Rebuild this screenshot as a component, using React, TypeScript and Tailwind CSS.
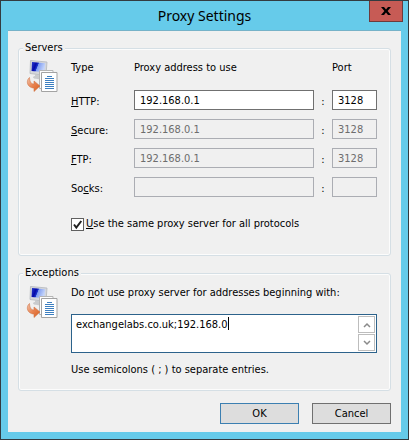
import { useState } from "react";
import type { ReactNode } from "react";

type Row = { id: string; label: ReactNode; address: string; port: string; disabled: boolean };

const Key = ({ children }: { children: string }) => (
  <span className="underline decoration-1 underline-offset-1">{children}</span>
);

const rows: Row[] = [
  { id: "http", label: <><Key>H</Key>TTP:</>, address: "192.168.0.1", port: "3128", disabled: false },
  { id: "secure", label: <><Key>S</Key>ecure:</>, address: "192.168.0.1", port: "3128", disabled: true },
  { id: "ftp", label: <><Key>F</Key>TP:</>, address: "192.168.0.1", port: "3128", disabled: true },
  { id: "socks", label: <>So<Key>c</Key>ks:</>, address: "", port: "", disabled: true },
];

const ProxyIcon = ({ id }: { id: string }) => (
  <svg width="32" height="32" viewBox="0 0 32 32" className="shrink-0" aria-hidden="true">
    <defs>
      <linearGradient id={`${id}-screen`} x1="0" y1="0" x2="1" y2="0.3">
        <stop offset="0" stopColor="#2a3fd0" />
        <stop offset="0.35" stopColor="#0508a8" />
        <stop offset="0.5" stopColor="#1a35cc" />
        <stop offset="0.54" stopColor="#7f9cf0" />
        <stop offset="1" stopColor="#c4d4fa" />
      </linearGradient>
      <linearGradient id={`${id}-arrow`} x1="0" y1="0" x2="1" y2="1">
        <stop offset="0" stopColor="#f3c3ab" />
        <stop offset="0.5" stopColor="#e8824f" />
        <stop offset="1" stopColor="#d85f20" />
      </linearGradient>
    </defs>
    <path d="M9 14.5l6 1v2c2 .5 2 1.800-1 1.800-4 0-7-.8-7-2 0-.8 2-1.300 2-1.300z" fill="#c9cbcd" />
    <path d="M4.500.5L21 2l-1 13.500L4 13.500z" fill="#d5d7db" stroke="#b4b7bd" strokeWidth=".8" />
    <path d="M6 2l13.200 1.200-.8 9L5.500 11z" fill={`url(#${id}-screen)`} />
    <path d="M13.500 10.500h13.500v18H13.500z" fill="#fdfdfd" stroke="#b5b5b5" />
    <path d="M15.500 12.500h15.500v19H15.500z" fill="#fff" stroke="#a3a3a3" />
    <path d="M21 16.500h5" stroke="#3d7fc0" />
    <path d="M19 18.500h9M19 20.500h9M19 22.500h9M19 24.500h9M19 26.500h9M19 28.500h9" stroke="#3d7fc0" />
    <path
      d="M3.500 17.500C1 19.500.5 23.500 3 26c1.500 1.500 3.300 2 5 2v3.500l6-5.500-6-5v3C5.500 24 3.800 22.500 3.500 17.500z"
      fill={`url(#${id}-arrow)`}
      stroke="#d07548"
      strokeWidth=".6"
    />
  </svg>
);

const Group = ({ title, className, children }: { title: string; className: string; children: ReactNode }) => (
  <fieldset className="min-w-0 rounded-[3px] border border-[#d5dfe5] pr-[13px] pl-[7px] shadow-[inset_0_0_0_1px_#fcfcfc]">
    <legend className="-ml-[3px] bg-[#f0f0f0] px-[2px] leading-[14px]">{title}</legend>
    <div className={`flex items-start gap-[13px] ${className}`}>{children}</div>
  </fieldset>
);

const fieldClass =
  "h-5 w-full min-w-0 border border-[#707070] bg-white px-[5px] text-black outline-none disabled:border-[#abadb3] disabled:bg-[#f0f0f0] disabled:text-[#6d6d6d]";

export default function App() {
  const [same, setSame] = useState(true);
  const [exceptions, setExceptions] = useState("exchangelabs.co.uk;192.168.0");

  return (
    <main className="border border-[#333b40] bg-[#66cbea] px-[7px] pb-[7px] font-['DejaVu_Sans_Condensed','DejaVu_Sans',sans-serif] text-[11px] leading-[14px] text-black">
      <header className="relative flex h-[29px] items-center justify-center">
        <h1 className="font-['Noto_Sans',sans-serif] text-[14px] leading-5">Proxy Settings</h1>
        <button
          aria-label="Close"
          className="absolute -right-[2px] top-0 flex h-[21px] w-[34px] items-center justify-center border border-t-0 border-[#6d3a3c] bg-[#c75b55]"
        >
          <svg width="10" height="8" viewBox="0 0 10 8" aria-hidden="true">
            <path d="M0 0h3l2 2.500L7 0h3L6.600 4 10 8H7L5 5.500 3 8H0l3.400-4z" fill="#000" />
          </svg>
        </button>
      </header>

      <form className="border-t border-[#76b2c8] bg-[#f0f0f0] px-[10px] pb-2 pt-[10px]" onSubmit={(e) => e.preventDefault()}>
        <Group title="Servers" className="pt-[5px] pb-6">
          <ProxyIcon id="servers" />
          <div className="min-w-0 flex-1">
            <div className="grid grid-cols-[63px_1fr_18px_45px] gap-y-[9px]">
              <span className="pt-px pb-[6px]">Type</span>
              <span className="col-span-2 pt-px">Proxy address to use</span>
              <span className="pt-px">Port</span>
              {rows.map((row) => (
                <div key={row.id} className="contents">
                  <label htmlFor={row.id} className="pt-[5px]">{row.label}</label>
                  <input id={row.id} type="text" className={fieldClass} defaultValue={row.address} disabled={row.disabled} />
                  <span className="pt-[5px] text-center">:</span>
                  <input
                    type="text"
                    aria-label={`${row.id} port`}
                    className={fieldClass}
                    defaultValue={row.port}
                    disabled={row.disabled}
                  />
                </div>
              ))}
            </div>
            <label className="mt-5 flex items-center gap-[2px]">
              <span className="relative flex">
                <input
                  type="checkbox"
                  checked={same}
                  onChange={(e) => setSame(e.target.checked)}
                  className="peer size-[13px] appearance-none border border-[#606060] bg-white"
                />
                <svg
                  width="13"
                  height="13"
                  viewBox="0 0 13 13"
                  className="pointer-events-none absolute inset-0 hidden peer-checked:block"
                  aria-hidden="true"
                >
                  <path d="M3 6.500l2.300 3L10.300 3" fill="none" stroke="#212121" strokeWidth="2" />
                </svg>
              </span>
              <span><Key>U</Key>se the same proxy server for all protocols</span>
            </label>
          </div>
        </Group>

        <div className="h-[10px]" />

        <Group title="Exceptions" className="pt-[6px] pb-[13px]">
          <ProxyIcon id="exceptions" />
          <div className="min-w-0 flex-1">
            <label htmlFor="exceptions">Do <Key>n</Key>ot use proxy server for addresses beginning with:</label>
            <div className="relative mt-[14px] flex h-[39px] border border-[#2c628b] bg-white p-px">
              <textarea
                id="exceptions"
                value={exceptions}
                onChange={(e) => setExceptions(e.target.value)}
                className="min-w-0 flex-1 resize-none overflow-hidden px-[3px] py-[2px] outline-none"
              />
              <span className="absolute left-[156px] top-[2px] h-[13px] w-px bg-black" />
              <div className="flex w-[17px] flex-col gap-px">
                <button type="button" aria-label="Scroll up" className="flex flex-1 items-center justify-center border border-[#bdbdbd]">
                  <svg width="8" height="6" viewBox="0 0 8 6" aria-hidden="true">
                    <path d="M1 5l3-3 3 3" fill="none" stroke="#8a8a8a" strokeWidth="1.500" />
                  </svg>
                </button>
                <button type="button" aria-label="Scroll down" className="flex flex-1 items-center justify-center border border-[#bdbdbd]">
                  <svg width="8" height="6" viewBox="0 0 8 6" aria-hidden="true">
                    <path d="M1 1l3 3 3-3" fill="none" stroke="#8a8a8a" strokeWidth="1.500" />
                  </svg>
                </button>
              </div>
            </div>
            <p className="mt-[10px]">Use semicolons ( ; ) to separate entries.</p>
          </div>
        </Group>

        <div className="mt-3 flex justify-end gap-[13px]">
          <button type="submit" className="h-[21px] w-[79px] border border-[#3c7fb1] bg-[#dddddd]">OK</button>
          <button type="button" className="h-[21px] w-[79px] border border-[#707070] bg-[#dddddd]">Cancel</button>
        </div>
      </form>
    </main>
  );
}
